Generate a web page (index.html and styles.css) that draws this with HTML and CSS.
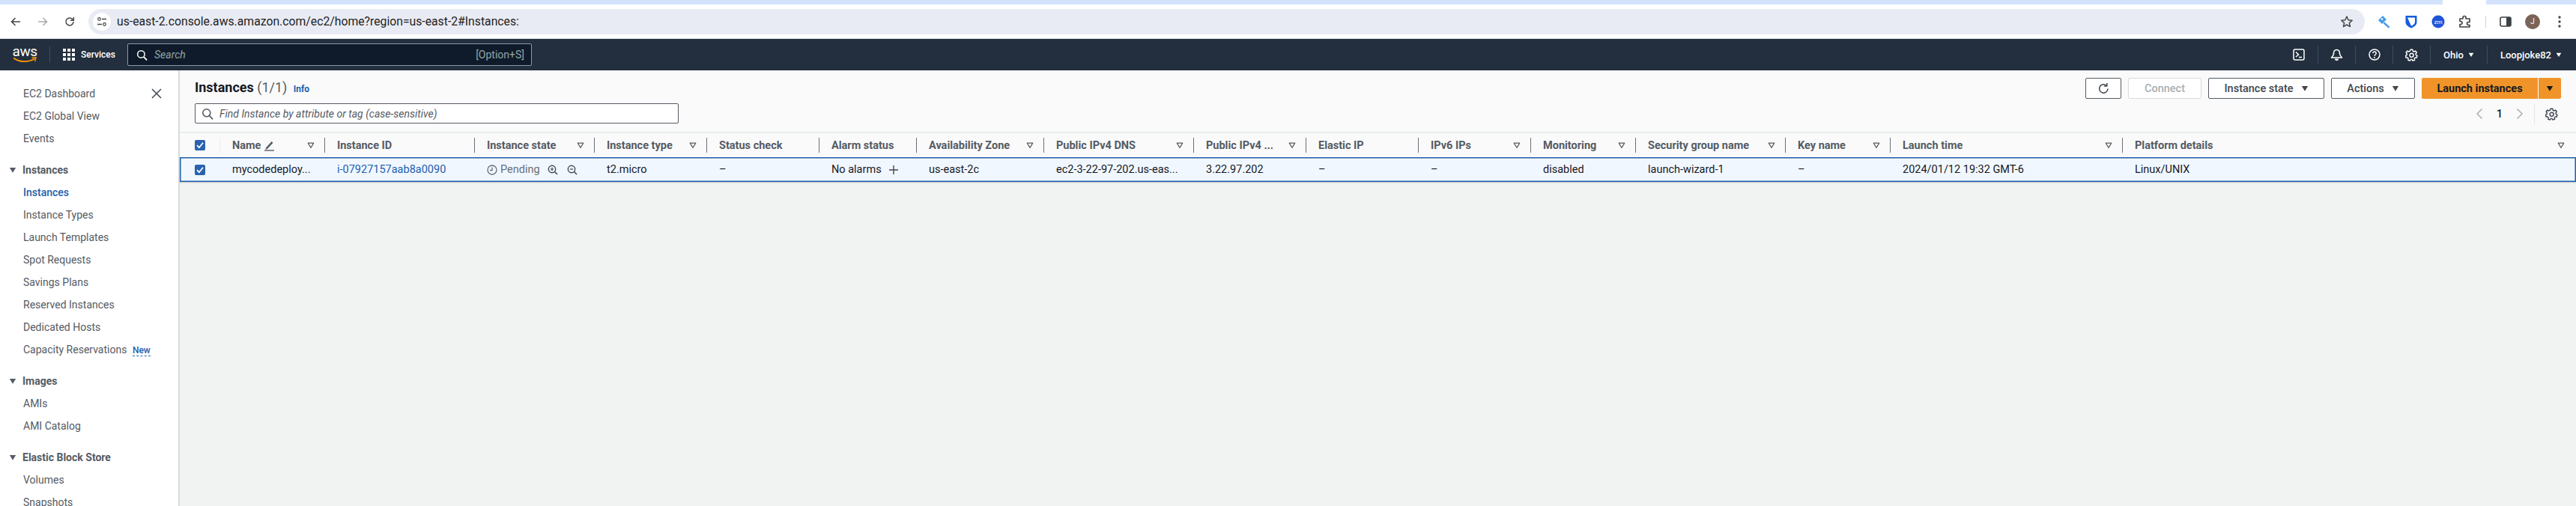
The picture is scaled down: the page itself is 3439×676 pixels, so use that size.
FILE: index.html
```html
<!DOCTYPE html>
<html lang="en">
<head>
  <meta charset="UTF-8" />
  <title>Instances | EC2 Management Console</title>
  <link rel="stylesheet" href="styles.css">
</head>
<body>
  <svg class="sprite" width="0" height="0">
    <symbol id="filter" viewBox="0 0 12 12"><path d="M1.500 2.500h9L6 10z" fill="none" stroke="currentColor" stroke-width="1.400" stroke-linejoin="round"/></symbol>
    <symbol id="caret" viewBox="0 0 12 12"><path d="M1 2.500h10L6 10.500z" fill="currentColor"/></symbol>
    <symbol id="check" viewBox="0 0 14 14"><rect width="14" height="14" rx="2" fill="#2a62b0"/><path d="M3 7.200l2.800 3L11 3.800" fill="none" stroke="#fff" stroke-width="1.800"/></symbol>
    <symbol id="search" viewBox="0 0 16 16"><circle cx="6.800" cy="6.800" r="5" fill="none" stroke="currentColor" stroke-width="1.600"/><path d="M10.500 10.500l4.500 4.800" stroke="currentColor" stroke-width="1.800"/></symbol>
    <symbol id="gear" viewBox="0 0 20 20"><path d="M8.400 1.500h3.200l.5 2.400 1.700.8 2.200-1.100 2 2.600-1.500 1.800.3 1.900 2 1.200-.8 3-2.400.1-1.200 1.500.4 2.400-3 .8-1.200-2h-1.900l-1.200 2-3-.8.4-2.400-1.200-1.500-2.400-.1-.8-3 2-1.200.3-1.900-1.500-1.800 2-2.600 2.200 1.100 1.700-.8z" fill="none" stroke="currentColor" stroke-width="1.700" stroke-linejoin="round"/><circle cx="10" cy="10.400" r="3" fill="none" stroke="currentColor" stroke-width="1.700"/></symbol>
  </svg>

  <!-- browser chrome -->
  <div class="tabstrip"><div class="tabstrip-tab"></div></div>
  <div class="toolbar">
    <svg class="tool-ico" width="16" height="16" viewBox="0 0 16 16"><path d="M14 8H3M7.500 3L2.500 8l5 5" fill="none" stroke="#444746" stroke-width="1.600"/></svg>
    <svg class="tool-ico" width="16" height="16" viewBox="0 0 16 16"><path d="M2 8h11M8.500 3l5 5-5 5" fill="none" stroke="#a8abae" stroke-width="1.600"/></svg>
    <svg class="tool-ico" width="16" height="16" viewBox="0 0 16 16"><path d="M13 8a5 5 0 1 1-1.500-3.600L13 6" fill="none" stroke="#444746" stroke-width="1.500"/><path d="M13.300 2v4.300H9" fill="none" stroke="#444746" stroke-width="1.500"/></svg>
    <div class="urlbar">
      <span class="url-tune">
        <svg width="14" height="14" viewBox="0 0 14 14"><circle cx="3.500" cy="3.500" r="1.800" fill="none" stroke="#444746" stroke-width="1.200"/><path d="M7 3.500h6M1 10.500h6" stroke="#444746" stroke-width="1.300"/><circle cx="10.500" cy="10.500" r="1.800" fill="none" stroke="#444746" stroke-width="1.200"/></svg>
      </span>
      <span class="url-text">us-east-2.console.aws.amazon.com/ec2/home?region=us-east-2#Instances:</span>
      <svg class="url-star" width="18" height="18" viewBox="0 0 18 18"><path d="M9 2l2.100 4.700 5.100.5-3.800 3.400 1.100 5L9 13l-4.500 2.600 1.100-5-3.800-3.400 5.100-.5z" fill="none" stroke="#444746" stroke-width="1.500" stroke-linejoin="round"/></svg>
    </div>
    <div class="ext-icons">
      <svg width="18" height="18" viewBox="0 0 18 18"><path d="M1 7l6-6 5 5-6 6zM9.500 9.500l7 6.500-1.500 1.500-1.500-.5-.5-1.500-1.500-.5-4-4z" fill="#4a9be8"/><circle cx="6" cy="5.500" r="1.200" fill="#fff"/></svg>
      <svg width="18" height="18" viewBox="0 0 16 18"><path d="M1 1h14a1 1 0 0 1 .5.500v8c0 4-4 6.500-7.500 8C4.500 16 .5 13.500.5 9.500v-8A1 1 0 0 1 1 1z" fill="#175ddc"/><path d="M3 3.500h10v6c0 2.500-2.500 4-5 5.300z" fill="#fff"/></svg>
      <svg width="18" height="18" viewBox="0 0 18 18"><circle cx="9" cy="9" r="8.500" fill="#1f55d8"/><text class="ext-zm" x="9" y="11.500" text-anchor="middle">zm</text></svg>
      <svg width="18" height="18" viewBox="0 0 18 18"><path d="M2 5h4V3.500a2 2 0 0 1 4 0V5h5v4.500h-1.500a2 2 0 0 0 0 4H15V16H2v-3.500h1a2 2 0 0 0 0-4H2z" fill="none" stroke="#3c4043" stroke-width="1.600" stroke-linejoin="round"/></svg>
      <span class="ext-sep"></span>
      <svg width="16" height="16" viewBox="0 0 16 16"><rect x="1" y="2" width="14" height="12" rx="2" fill="none" stroke="#3c4043" stroke-width="1.600"/><rect x="9" y="2" width="6" height="12" rx="1" fill="#3c4043"/></svg>
      <span class="avatar">J</span>
      <svg class="ext-dots" width="4" height="16" viewBox="0 0 4 16"><circle cx="2" cy="2" r="1.700" fill="#444746"/><circle cx="2" cy="8" r="1.700" fill="#444746"/><circle cx="2" cy="14" r="1.700" fill="#444746"/></svg>
    </div>
  </div>

  <!-- aws top nav -->
  <header class="topnav">
    <div class="aws-logo">
      <span class="aws-word">aws</span>
      <svg width="32" height="9" viewBox="0 0 32 9"><path d="M1 1.500c8 6 20 6 28 1" fill="none" stroke="#f90" stroke-width="1.800"/><path d="M25.500 1H31l-1.500 5" fill="none" stroke="#f90" stroke-width="1.500"/></svg>
    </div>
    <span class="nav-rule"></span>
    <svg class="svc-grid" width="16" height="16" viewBox="0 0 16 16"><path d="M0 0h4v4H0zM6 0h4v4H6zM12 0h4v4h-4zM0 6h4v4H0zM6 6h4v4H6zM12 6h4v4h-4zM0 12h4v4H0zM6 12h4v4H6zM12 12h4v4h-4z" fill="#fff"/></svg>
    <span class="svc-label">Services</span>
    <div class="nav-search">
      <svg class="nav-search-ico" width="15" height="15"><use href="#search"/></svg>
      <span class="nav-search-ph">Search</span>
      <span class="nav-search-key">[Option+S]</span>
    </div>
    <div class="nav-right">
      <span class="nav-item nav-ico"><svg width="16" height="16" viewBox="0 0 16 16"><rect x="1" y="1" width="14" height="14" rx="2" fill="none" stroke="#fff" stroke-width="1.500"/><path d="M4 4.500L7.500 8 4 11M8 11.500h4" fill="none" stroke="#fff" stroke-width="1.500"/></svg></span>
      <span class="nav-item nav-ico"><svg width="17" height="17" viewBox="0 0 17 17"><path d="M8.500 1.500c-3 0-4 2.500-4 5 0 2.500-1.500 4-3 5.500h14c-1.500-1.500-3-3-3-5.500 0-2.500-1-5-4-5z" fill="none" stroke="#fff" stroke-width="1.600" stroke-linejoin="round"/><path d="M6 13.500a2.500 2.500 0 0 0 5 0z" fill="#fff"/></svg></span>
      <span class="nav-item nav-ico"><svg width="16" height="16" viewBox="0 0 16 16"><circle cx="8" cy="8" r="7" fill="none" stroke="#fff" stroke-width="1.500"/><path d="M5.800 6.200a2.200 2.200 0 1 1 3.300 1.900C8.400 8.500 8 9 8 9.800" fill="none" stroke="#fff" stroke-width="1.500"/><circle cx="8" cy="12" r="1" fill="#fff"/></svg></span>
      <span class="nav-item nav-ico"><svg class="nav-gear" width="17" height="17"><use href="#gear"/></svg></span>
      <span class="nav-item nav-text">Ohio<svg width="8" height="8"><use href="#caret"/></svg></span>
      <span class="nav-item nav-text nav-last">Loopjoke82<svg width="8" height="8"><use href="#caret"/></svg></span>
    </div>
  </header>

  <div class="page">
    <aside class="sidenav">
      <div class="side-group">
        <div class="side-top"><a class="side-link">EC2 Dashboard</a>
          <svg class="side-close" width="14" height="14" viewBox="0 0 14 14"><path d="M1 1l12 12M13 1L1 13" stroke="#414750" stroke-width="1.500"/></svg>
        </div>
        <a class="side-link">EC2 Global View</a>
        <a class="side-link">Events</a>
      </div>
      <div class="side-group">
        <div class="side-head"><svg width="10" height="10"><use href="#caret"/></svg>Instances</div>
        <a class="side-link side-active">Instances</a>
        <a class="side-link">Instance Types</a>
        <a class="side-link">Launch Templates</a>
        <a class="side-link">Spot Requests</a>
        <a class="side-link">Savings Plans</a>
        <a class="side-link">Reserved Instances</a>
        <a class="side-link">Dedicated Hosts</a>
        <a class="side-link">Capacity Reservations <span class="side-new">New</span></a>
      </div>
      <div class="side-group">
        <div class="side-head"><svg width="10" height="10"><use href="#caret"/></svg>Images</div>
        <a class="side-link">AMIs</a>
        <a class="side-link">AMI Catalog</a>
      </div>
      <div class="side-group">
        <div class="side-head"><svg width="10" height="10"><use href="#caret"/></svg>Elastic Block Store</div>
        <a class="side-link">Volumes</a>
        <a class="side-link">Snapshots</a>
      </div>
    </aside>

    <main class="content">
      <section class="panel">
        <div class="panel-head">
          <h1 class="panel-title">Instances <span class="panel-count">(1/1)</span> <a class="info-link">Info</a></h1>
          <div class="actions">
            <button class="btn btn-icon"><svg width="17" height="17" viewBox="0 0 17 17"><path d="M14 8.500a5.700 5.700 0 1 1-2-4.400" fill="none" stroke="#414750" stroke-width="1.500"/><path d="M12.800 1v4H8.800" fill="none" stroke="#414750" stroke-width="1.500"/></svg></button>
            <button class="btn btn-off">Connect</button>
            <button class="btn btn-state">Instance state<svg width="10" height="10"><use href="#caret"/></svg></button>
            <button class="btn btn-actions">Actions<svg width="10" height="10"><use href="#caret"/></svg></button>
            <div class="split">
              <button class="btn-launch">Launch instances</button>
              <button class="btn-launch-more"><svg width="10" height="10"><use href="#caret"/></svg></button>
            </div>
          </div>
        </div>
        <div class="panel-filter">
          <div class="find-box">
            <svg width="16" height="16"><use href="#search"/></svg>
            <span>Find Instance by attribute or tag (case-sensitive)</span>
          </div>
          <div class="pager">
            <svg width="10" height="16" viewBox="0 0 10 16"><path d="M8.500 1.500L2 8l6.500 6.500" fill="none" stroke="#a7b0b5" stroke-width="1.500"/></svg>
            <span class="pager-num">1</span>
            <svg width="10" height="16" viewBox="0 0 10 16"><path d="M1.500 1.500L8 8l-6.500 6.500" fill="none" stroke="#a7b0b5" stroke-width="1.500"/></svg>
            <span class="pager-rule"></span>
            <svg class="pager-gear" width="17" height="17"><use href="#gear"/></svg>
          </div>
        </div>

        <div class="grid grid-head">
          <div class="cell-check"><svg width="14" height="14"><use href="#check"/></svg></div>
          <div class="th">Name <svg class="name-pen" width="15" height="15" viewBox="0 0 15 15"><path d="M3 10.500L10.500 2l2 1.800-7.600 8.300-2.400.6z" fill="#545b64"/><path d="M1 14h13" stroke="#545b64" stroke-width="1.400"/></svg><svg class="th-filter" width="10" height="10"><use href="#filter"/></svg></div>
          <div class="th">Instance ID</div>
          <div class="th">Instance state<svg class="th-filter" width="10" height="10"><use href="#filter"/></svg></div>
          <div class="th">Instance type<svg class="th-filter" width="10" height="10"><use href="#filter"/></svg></div>
          <div class="th">Status check</div>
          <div class="th">Alarm status</div>
          <div class="th">Availability Zone<svg class="th-filter" width="10" height="10"><use href="#filter"/></svg></div>
          <div class="th">Public IPv4 DNS<svg class="th-filter" width="10" height="10"><use href="#filter"/></svg></div>
          <div class="th">Public IPv4 ...<svg class="th-filter" width="10" height="10"><use href="#filter"/></svg></div>
          <div class="th">Elastic IP</div>
          <div class="th">IPv6 IPs<svg class="th-filter" width="10" height="10"><use href="#filter"/></svg></div>
          <div class="th">Monitoring<svg class="th-filter" width="10" height="10"><use href="#filter"/></svg></div>
          <div class="th">Security group name<svg class="th-filter" width="10" height="10"><use href="#filter"/></svg></div>
          <div class="th">Key name<svg class="th-filter" width="10" height="10"><use href="#filter"/></svg></div>
          <div class="th">Launch time<svg class="th-filter" width="10" height="10"><use href="#filter"/></svg></div>
          <div class="th th-last">Platform details<svg class="th-filter" width="10" height="10"><use href="#filter"/></svg></div>
        </div>
      </section>

      <div class="grid grid-row">
        <div class="cell-check"><svg width="14" height="14"><use href="#check"/></svg></div>
        <div class="td">mycodedeploy...</div>
        <div class="td td-link">i-07927157aab8a0090</div>
        <div class="td td-state">
          <svg width="14" height="14" viewBox="0 0 14 14"><circle cx="7" cy="7" r="6" fill="none" stroke="#687078" stroke-width="1.300"/><path d="M7 3.500V7.500H4" fill="none" stroke="#687078" stroke-width="1.300"/></svg>
          <span class="state-text">Pending</span>
          <svg class="zoom-a" width="14" height="14" viewBox="0 0 14 14"><circle cx="6" cy="6" r="4.700" fill="none" stroke="#414750" stroke-width="1.400"/><path d="M9.500 9.500l3.500 3.500" stroke="#414750" stroke-width="1.600"/><path d="M6 3.800v4.400M3.800 6h4.400" stroke="#414750" stroke-width="1.200"/></svg>
          <svg class="zoom-b" width="14" height="14" viewBox="0 0 14 14"><circle cx="6" cy="6" r="4.700" fill="none" stroke="#414750" stroke-width="1.400"/><path d="M9.500 9.500l3.500 3.500" stroke="#414750" stroke-width="1.600"/><path d="M3.800 6h4.400" stroke="#414750" stroke-width="1.200"/></svg>
        </div>
        <div class="td">t2.micro</div>
        <div class="td">–</div>
        <div class="td td-alarm">No alarms<svg width="14" height="14" viewBox="0 0 14 14"><path d="M7 1v12M1 7h12" stroke="#414750" stroke-width="1.400"/></svg></div>
        <div class="td">us-east-2c</div>
        <div class="td">ec2-3-22-97-202.us-eas...</div>
        <div class="td">3.22.97.202</div>
        <div class="td">–</div>
        <div class="td">–</div>
        <div class="td">disabled</div>
        <div class="td">launch-wizard-1</div>
        <div class="td">–</div>
        <div class="td">2024/01/12 19:32 GMT-6</div>
        <div class="td">Linux/UNIX</div>
      </div>
    </main>
  </div>
</body>
</html>
```

FILE: styles.css
```css
* {
  box-sizing: border-box;
}
html, body {
  height: 100%;
}
body {
  margin: 0;
  overflow: hidden;
  font-family: Roboto, "Liberation Sans", sans-serif;
  font-size: 14.5px;
  color: #16191f;
  background: #fff;
  display: flex;
  flex-direction: column;
}
.sprite {
  position: absolute;
}
a {
  cursor: pointer;
}

/* browser chrome */
.tabstrip {
  height: 6px;
  background: #d3e3fd;
  padding-left: 3261px;
}
.tabstrip-tab {
  width: 58px;
  height: 6px;
  background: #fff;
}
.toolbar {
  height: 46px;
  background: #fff;
  display: flex;
  align-items: center;
  padding-left: 13px;
  border-bottom: 1px solid #e3e5e8;
}
.tool-ico {
  margin-right: 20px;
  flex: none;
}
.urlbar {
  width: 3039px;
  margin-left: -3px;
  height: 34px;
  border-radius: 17px;
  background: #e9ebf4;
  display: flex;
  align-items: center;
  padding-left: 6px;
  padding-right: 15px;
}
.url-tune {
  width: 24px;
  height: 24px;
  border-radius: 50%;
  background: #fff;
  display: flex;
  align-items: center;
  justify-content: center;
}
.url-text {
  margin-left: 8px;
  font-size: 15.75px;
  color: #1f1f1f;
  flex: 1;
}
.ext-icons {
  display: flex;
  align-items: center;
  gap: 18px;
  margin-left: 17px;
}
.ext-zm {
  font: 8px Roboto, sans-serif;
  fill: #fff;
}
.ext-sep {
  width: 1px;
  height: 16px;
  background: #c7d3ea;
}
.avatar {
  width: 20px;
  height: 20px;
  border-radius: 50%;
  background: #7b6358;
  color: #fff;
  font-size: 10px;
  display: flex;
  align-items: center;
  justify-content: center;
}
.ext-dots {
  margin-left: 6px;
}

/* top nav */
.topnav {
  height: 42px;
  background: #232f3e;
  color: #fff;
  display: flex;
  align-items: center;
  padding-left: 17px;
  flex: none;
}
.aws-logo {
  width: 32px;
  display: flex;
  flex-direction: column;
  align-items: center;
}
.aws-word {
  font-size: 19px;
  line-height: 14px;
  letter-spacing: -0.5px;
}
.nav-rule {
  width: 1px;
  height: 22px;
  background: #414d5c;
  margin: 0 17px;
}
.svc-grid {
  flex: none;
}
.svc-label {
  margin-left: 8px;
  font-size: 12px;
  font-weight: 500;
  width: 62px;
}
.nav-search {
  width: 540px;
  height: 30px;
  background: #0f1b2a;
  border: 1px solid #8d99a8;
  border-radius: 2px;
  display: flex;
  align-items: center;
  padding: 0 9px 0 11px;
  font-size: 14px;
  color: #95a5a6;
}
.nav-search-ico {
  color: #fff;
}
.nav-search-ph {
  margin-left: 9px;
  font-style: italic;
  flex: 1;
}
.nav-right {
  margin-left: auto;
  display: flex;
  align-items: center;
  height: 24px;
}
.nav-item {
  height: 24px;
  display: flex;
  align-items: center;
  gap: 6px;
  padding: 0 17px;
  border-left: 1px solid #414d5c;
  font-size: 13px;
  font-weight: 500;
}
.nav-item:first-child {
  border-left: none;
}
.nav-ico {
  width: 50px;
  padding: 0;
  justify-content: center;
}
.nav-last {
  padding-right: 19px;
}
.nav-gear {
  color: #fff;
}

/* layout */
.page {
  flex: 1;
  display: flex;
  min-height: 0;
}
.sidenav {
  width: 240px;
  flex: none;
  background: #fff;
  border-right: 2px solid #d5dbdb;
  padding: 16px 0 0 31px;
  font-size: 14px;
  color: #545b64;
  overflow: hidden;
}
.side-group {
  margin-bottom: 12px;
}
.side-link {
  display: block;
  height: 30px;
  line-height: 30px;
  white-space: nowrap;
}
.side-top {
  display: flex;
  justify-content: space-between;
  align-items: center;
  padding-right: 22px;
}
.side-close {
  flex: none;
}
.side-head {
  height: 30px;
  line-height: 30px;
  margin-left: -19px;
  font-weight: 700;
  display: flex;
  align-items: center;
  gap: 8px;
  color: #545b64;
}
.side-active {
  color: #1d5fae;
  font-weight: 500;
}
.side-new {
  margin-left: 4px;
  font-size: 12px;
  font-weight: 500;
  color: #1d5fae;
  border-bottom: 1px dashed #1d5fae;
}
.content {
  flex: 1;
  min-width: 0;
  background: #f1f2f2;
}
.panel {
  background: #fafafa;
}
.panel-head {
  height: 44px;
  display: flex;
  justify-content: space-between;
  padding: 10px 20px 0 20px;
}
.panel-title {
  margin: 0;
  font-size: 18px;
  font-weight: 700;
  line-height: 24px;
  margin-top: 1px;
}
.panel-count {
  font-weight: 400;
  color: #545b64;
}
.info-link {
  margin-left: 4px;
  font-size: 12px;
  font-weight: 700;
  color: #1d5fae;
}
.actions {
  display: flex;
  align-items: center;
  height: 28px;
}
.btn {
  height: 28px;
  background: #fff;
  border: 1px solid #545b64;
  border-radius: 2px;
  font: 500 14.5px Roboto, sans-serif;
  color: #414750;
  display: flex;
  align-items: center;
  justify-content: center;
  gap: 10px;
  margin-right: 9px;
  padding: 0;
}
.btn-icon {
  width: 48px;
}
.btn-off {
  width: 98px;
  border-color: #d5dbdb;
  color: #a7b0b5;
}
.btn-state {
  width: 155px;
}
.btn-actions {
  width: 112px;
}
.split {
  display: flex;
  gap: 1px;
}
.btn-launch, .btn-launch-more {
  height: 28px;
  border: none;
  background: #f0942a;
  color: #16191f;
  font: 700 14.5px Roboto, sans-serif;
  padding: 0;
  display: flex;
  align-items: center;
  justify-content: center;
}
.btn-launch {
  width: 155px;
  border-radius: 2px 0 0 2px;
}
.btn-launch-more {
  width: 30px;
  border-radius: 0 2px 2px 0;
}
.panel-filter {
  height: 38px;
  display: flex;
  justify-content: space-between;
  padding-left: 20px;
}
.find-box {
  width: 646px;
  height: 27px;
  background: #fff;
  border: 1px solid #545b64;
  border-radius: 2px;
  display: flex;
  align-items: center;
  gap: 8px;
  padding-left: 8px;
  color: #545b64;
  font-size: 14px;
  font-style: italic;
}
.pager {
  display: flex;
  align-items: center;
  height: 28px;
  padding-right: 24px;
  color: #414750;
}
.pager-num {
  width: 44px;
  text-align: center;
  font-size: 14px;
  font-weight: 500;
  color: #16191f;
}
.pager-rule {
  width: 1px;
  height: 28px;
  background: #e3e5e8;
  margin: 0 14px;
}

/* table */
.grid {
  display: grid;
  grid-template-columns: 54px 140px 200px 160px 150px 150px 130px 170px 200px 150px 150px 150px 140px 200px 140px 310px 1fr;
  align-items: center;
}
.grid-head {
  height: 34px;
  border-top: 2px solid #eaeded;
  font-size: 14.5px;
  font-weight: 700;
  color: #545b64;
}
.grid-row {
  height: 33px;
  background: #f1f7ff;
  box-shadow: inset 0 0 0 1.5px #1d5fae, 0 1px 1px rgba(0, 0, 0, 0.18);
  font-size: 14.5px;
}
.cell-check {
  padding-left: 20px;
  height: 20px;
  display: flex;
  align-items: center;
}
.grid-head .cell-check {
  border-right: 1px solid #eaeded;
}
.th {
  height: 20px;
  display: flex;
  align-items: center;
  padding: 0 13px 0 16px;
  border-right: 1px solid #687078;
  white-space: nowrap;
}
.th-last {
  border-right: none;
  padding-right: 15px;
}
.th-filter {
  margin-left: auto;
  flex: none;
  color: #545b64;
}
.name-pen {
  margin-left: 4px;
}
.td {
  padding-left: 16px;
  white-space: nowrap;
  display: flex;
  align-items: center;
}
.td-link {
  color: #1d5fae;
}
.td-state {
  gap: 4px;
}
.state-text {
  color: #687078;
}
.zoom-a {
  margin-left: 6px;
}
.zoom-b {
  margin-left: 8px;
}
.td-alarm {
  gap: 9px;
}
```
